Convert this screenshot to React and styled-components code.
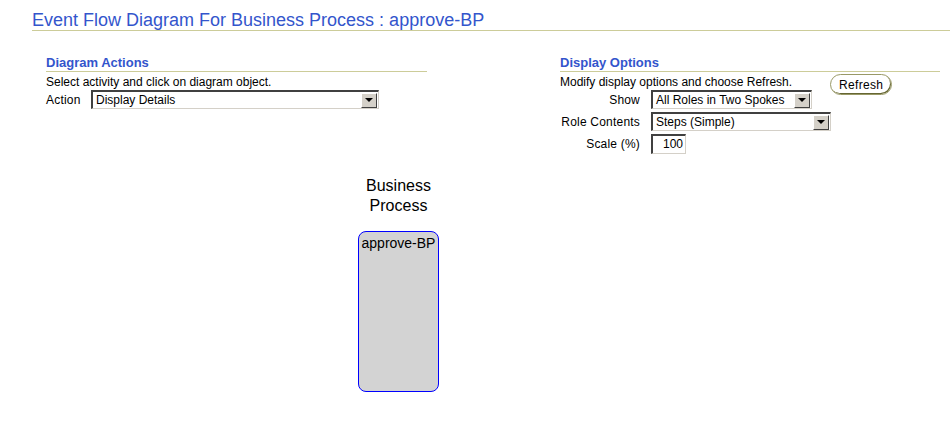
import React from "react"
import styled, { createGlobalStyle } from "styled-components"

/*
 * Styles
 */

const GlobalStyle = createGlobalStyle`
  body {
    margin: 0;
    background: #ffffff;
    font-family: "Liberation Sans", Arial, sans-serif;
    color: #000000;
  }
`

const Page = styled.div`
  width: 950px;
  height: 432px;
  overflow: hidden;
`

const TitleBar = styled.div`
  margin-left: 32px;
  padding-top: 10px;
  border-bottom: 1px solid #cccc99;
`

const Title = styled.h1`
  margin: 0;
  font-size: 18px;
  font-weight: normal;
  line-height: 20px;
  color: #3355cc;
`

const Sections = styled.div`
  display: flex;
  margin-top: 24px;
`

const Section = styled.div`
  margin-left: ${(p) => p.left}px;
  width: ${(p) => p.width}px;
`

const SectionHeader = styled.h2`
  margin: 0;
  font-size: 13px;
  font-weight: bold;
  line-height: 16px;
  color: #3355cc;
  border-bottom: 1px solid #cccc99;
`

const Hint = styled.div`
  font-size: 12px;
  line-height: 14px;
  margin-top: 3px;
  white-space: nowrap;
`

const HintRow = styled.div`
  display: flex;
  align-items: flex-start;
  height: 17px;
`

const FormGrid = styled.div`
  display: grid;
  grid-template-columns: ${(p) => p.labelWidth}px auto;
  column-gap: ${(p) => p.gap}px;
  row-gap: 3px;
  align-items: center;
  margin-top: ${(p) => p.top || 0}px;
`

const Label = styled.label`
  font-size: 12px;
  letter-spacing: 0.2px;
  text-align: ${(p) => (p.align === "left" ? "left" : "right")};
  white-space: nowrap;
`

const SelectBox = styled.div`
  box-sizing: border-box;
  width: ${(p) => p.width}px;
  height: 19px;
  display: flex;
  align-items: center;
  justify-content: space-between;
  background: #ffffff;
  border-top: 2px solid #404040;
  border-left: 2px solid #404040;
  border-right: 1px solid #d4d0c8;
  border-bottom: 1px solid #d4d0c8;
  font-size: 12px;
  padding-left: 3px;
`

const Arrow = styled.div`
  box-sizing: border-box;
  width: 16px;
  height: 15px;
  margin-right: 1px;
  background: #d4d0c8;
  border-top: 1px solid #ffffff;
  border-left: 1px solid #ffffff;
  border-right: 1px solid #404040;
  border-bottom: 1px solid #404040;
  display: flex;
  align-items: center;
  justify-content: center;

  &::after {
    content: "";
    border-left: 4px solid transparent;
    border-right: 4px solid transparent;
    border-top: 4px solid #000000;
  }
`

const TextInput = styled.div`
  box-sizing: border-box;
  width: 35px;
  height: 20px;
  border-top: 2px solid #404040;
  border-left: 2px solid #404040;
  border-right: 1px solid #d4d0c8;
  border-bottom: 1px solid #d4d0c8;
  font-size: 12px;
  text-align: right;
  padding-right: 2px;
  line-height: 17px;
`

const RefreshButton = styled.button`
  flex: none;
  margin-left: 38px;
  margin-top: 2px;
  box-sizing: border-box;
  width: 62px;
  height: 21px;
  border-radius: 11px;
  border: 1px solid #999966;
  box-shadow: inset -1px -1px 0 #666633;
  background: #ffffff;
  font-family: "Liberation Sans", Arial, sans-serif;
  font-size: 12px;
  letter-spacing: 0.3px;
  padding: 0;
  color: #000000;
`

const Diagram = styled.div`
  margin-left: 358px;
  margin-top: 22px;
  width: 81px;
  display: flex;
  flex-direction: column;
  align-items: center;
`

const LaneTitle = styled.div`
  font-size: 16px;
  line-height: 20px;
  text-align: center;
  white-space: nowrap;
`

const LaneBox = styled.div`
  box-sizing: border-box;
  margin-top: 15px;
  width: 81px;
  height: 161px;
  background: #d3d3d3;
  border: 1px solid #0000ff;
  border-radius: 8px;
  font-size: 14px;
  line-height: 16px;
  text-align: center;
  padding-top: 3px;
  white-space: nowrap;
`

/*
 * Component
 */

const Select = ({ width, value }) => (
  <SelectBox width={width}>
    <span>{value}</span>
    <Arrow />
  </SelectBox>
)

export default function App() {
  return (
    <Page>
      <GlobalStyle />
      <TitleBar>
        <Title>Event Flow Diagram For Business Process : approve-BP</Title>
      </TitleBar>
      <Sections>
        <Section left={46} width={381}>
          <SectionHeader>Diagram Actions</SectionHeader>
          <HintRow>
            <Hint>Select activity and click on diagram object.</Hint>
          </HintRow>
          <FormGrid labelWidth={40} gap={5} top={1}>
            <Label align="left">Action</Label>
            <Select width={288} value="Display Details" />
          </FormGrid>
        </Section>
        <Section left={133} width={380}>
          <SectionHeader>Display Options</SectionHeader>
          <HintRow>
            <Hint>Modify display options and choose Refresh.</Hint>
            <RefreshButton>Refresh</RefreshButton>
          </HintRow>
          <FormGrid labelWidth={80} gap={11} top={1}>
            <Label>Show</Label>
            <Select width={161} value="All Roles in Two Spokes" />
            <Label>Role Contents</Label>
            <Select width={180} value="Steps (Simple)" />
            <Label>Scale (%)</Label>
            <TextInput>100</TextInput>
          </FormGrid>
        </Section>
      </Sections>
      <Diagram>
        <LaneTitle>
          Business
          <br />
          Process
        </LaneTitle>
        <LaneBox>approve-BP</LaneBox>
      </Diagram>
    </Page>
  )
}
